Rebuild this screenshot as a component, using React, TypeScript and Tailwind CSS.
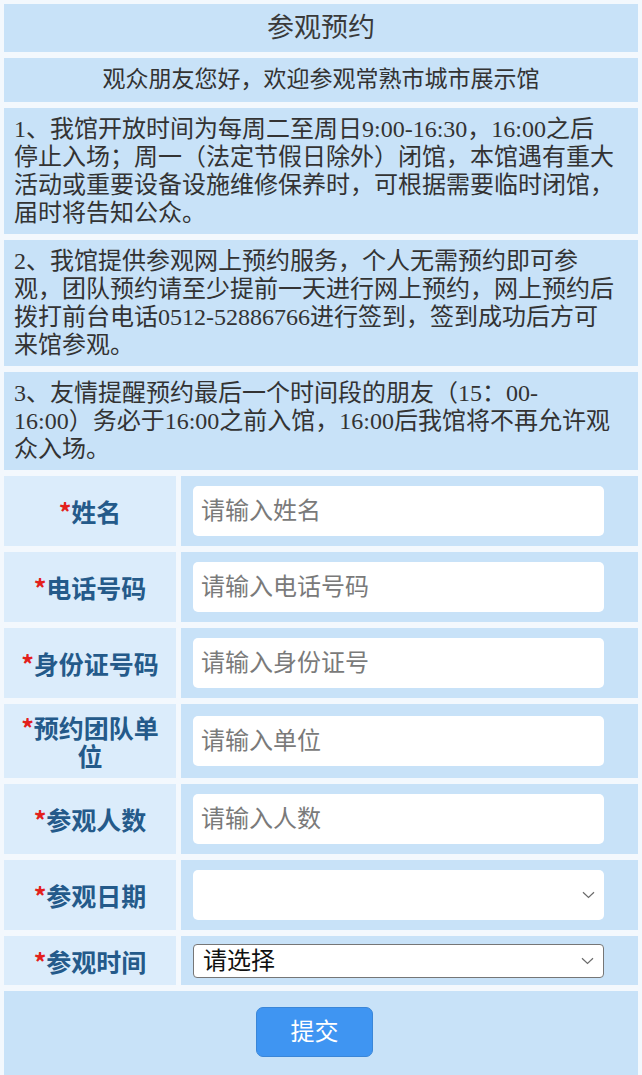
import React from 'react';

/**
 * Visit reservation page (参观预约)
 * Notice rows on top, then a two-column label / field form
 */

const FONT = "font-['Liberation_Serif','Noto_Sans_CJK_SC',serif]";
const LABEL_FONT = "font-['Noto_Sans_CJK_SC','Noto_Sans',sans-serif]";

function Chevron() {
  return (
    <svg width="13" height="8" viewBox="0 0 13 8" fill="none" className="shrink-0">
      <path d="M1 1.2 L6.5 6.5 L12 1.2" stroke="#6b6b6b" strokeWidth="1.2" />
    </svg>
  );
}

function Label({ text, tall }: { text: string; tall?: boolean }) {
  return (
    <div
      className={`bg-[#dbecfb] flex items-center justify-center text-center px-[8px] ${tall ? 'py-[9px]' : ''}`}
    >
      <span className={`${LABEL_FONT} text-[25px] leading-[28px] font-bold text-[#245a8a]`}>
        <span className="text-[#e3201b]">*</span>
        {text}
      </span>
    </div>
  );
}

function TextRow({ label, placeholder, tall }: { label: string; placeholder: string; tall?: boolean }) {
  return (
    <div className={`grid grid-cols-[172px_1fr] gap-[5px] ${tall ? 'min-h-[74px]' : 'h-[70px]'}`}>
      <Label text={label} tall={tall} />
      <div className="bg-[#c8e2f8] flex items-center pl-[12px] pr-[34px]">
        <input
          type="text"
          placeholder={placeholder}
          className={`${FONT} w-full h-[50px] bg-white rounded-[5px] px-[8px] text-[24px] text-[#333] placeholder:text-[#7a7a7a] outline-none`}
        />
      </div>
    </div>
  );
}

export default function App() {
  return (
    <div className={`${FONT} min-h-screen bg-[#f3f8fd] px-[4px] pt-[4px] text-[#333] flex flex-col gap-[6px]`}>
      {/* Title */}
      <div className="h-[48px] bg-[#c8e2f8] flex items-center justify-center">
        <h1 className="text-[27px] text-[#3a3a3a]">参观预约</h1>
      </div>

      {/* Greeting */}
      <div className="h-[44px] bg-[#c8e2f8] flex items-center justify-center">
        <p className="text-[23px]">观众朋友您好，欢迎参观常熟市城市展示馆</p>
      </div>

      {/* Notices */}
      <div className="bg-[#c8e2f8] px-[10px] py-[7px]">
        <p className="text-[24px] leading-[28px] whitespace-nowrap">
          1、我馆开放时间为每周二至周日9:00-16:30，16:00之后
          <br />
          停止入场；周一（法定节假日除外）闭馆，本馆遇有重大
          <br />
          活动或重要设备设施维修保养时，可根据需要临时闭馆，
          <br />
          届时将告知公众。
        </p>
      </div>
      <div className="bg-[#c8e2f8] px-[10px] py-[7px]">
        <p className="text-[24px] leading-[28px] whitespace-nowrap">
          2、我馆提供参观网上预约服务，个人无需预约即可参
          <br />
          观，团队预约请至少提前一天进行网上预约，网上预约后
          <br />
          拨打前台电话0512-52886766进行签到，签到成功后方可
          <br />
          来馆参观。
        </p>
      </div>
      <div className="bg-[#c8e2f8] px-[10px] py-[7px]">
        <p className="text-[24px] leading-[28px] whitespace-nowrap">
          3、友情提醒预约最后一个时间段的朋友（15：00-
          <br />
          16:00）务必于16:00之前入馆，16:00后我馆将不再允许观
          <br />
          众入场。
        </p>
      </div>

      {/* Form */}
      <TextRow label="姓名" placeholder="请输入姓名" />
      <TextRow label="电话号码" placeholder="请输入电话号码" />
      <TextRow label="身份证号码" placeholder="请输入身份证号" />
      <TextRow label="预约团队单位" placeholder="请输入单位" tall />
      <TextRow label="参观人数" placeholder="请输入人数" />

      {/* Date */}
      <div className="grid grid-cols-[172px_1fr] gap-[5px] h-[70px]">
        <Label text="参观日期" />
        <div className="bg-[#c8e2f8] flex items-center pl-[12px] pr-[34px]">
          <div className="w-full h-[50px] bg-white rounded-[5px] flex items-center justify-end pr-[9px]">
            <Chevron />
          </div>
        </div>
      </div>

      {/* Time */}
      <div className="grid grid-cols-[172px_1fr] gap-[5px] h-[49px]">
        <Label text="参观时间" />
        <div className="bg-[#c8e2f8] flex items-center pl-[12px] pr-[34px]">
          <div className="w-full h-[34px] bg-white border border-[#767676] rounded-[4px] flex items-center justify-between pl-[9px] pr-[9px]">
            <span className="text-[24px] text-[#111] leading-none">请选择</span>
            <Chevron />
          </div>
        </div>
      </div>

      {/* Submit */}
      <div className="bg-[#c8e2f8] h-[90px] flex justify-center pt-[16px] pr-[13px]">
        <button
          type="button"
          className="w-[117px] h-[50px] rounded-[7px] bg-[#3f95f2] border border-[#3a86d8] text-white text-[24px]"
        >
          提交
        </button>
      </div>
    </div>
  );
}
